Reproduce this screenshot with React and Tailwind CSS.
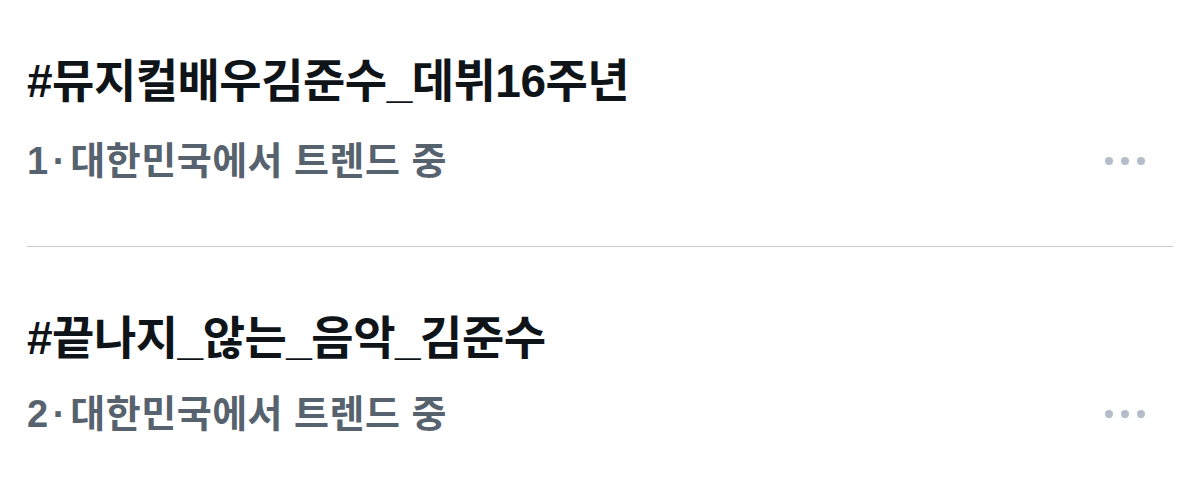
import React from "react";

const font = { fontFamily: '"Liberation Sans", "Noto Sans CJK KR", sans-serif' };

function Dots() {
  return (
    <div className="flex items-center gap-[8px]">
      <span className="block w-[8px] h-[8px] rounded-full bg-[#b4bec8]" />
      <span className="block w-[8px] h-[8px] rounded-full bg-[#b4bec8]" />
      <span className="block w-[8px] h-[8px] rounded-full bg-[#b4bec8]" />
    </div>
  );
}

function Trend({ title, rank, tight }) {
  return (
    <div className="flex flex-col">
      <div className="text-[46px] leading-[56px] font-bold text-[#0f1419] tracking-[-0.5px]">{title}</div>
      <div className={`${tight ? "mt-[26px]" : "mt-[30px]"} flex items-center justify-between`}>
        <div className="text-[38px] leading-[44px] font-bold text-[#56636e]">
          <span className="tracking-[-0.5px]">{rank}</span>
          <span className="mx-[5px]">·</span>
          <span className="tracking-[0.5px]">대한민국에서 트렌드 중</span>
        </div>
        <div className="pr-[28px]">
          <Dots />
        </div>
      </div>
    </div>
  );
}

export default function App() {
  return (
    <div className="w-[1200px] h-[482px] bg-white pl-[27px] pr-[27px] pt-[53px]" style={font}>
      <Trend title="#뮤지컬배우김준수_데뷔16주년" rank="1" />
      <div className="mt-[63px] h-[1px] bg-[#c8cbce]" />
      <div className="pt-[63px]">
        <Trend title="#끝나지_않는_음악_김준수" rank="2" tight />
      </div>
    </div>
  );
}
